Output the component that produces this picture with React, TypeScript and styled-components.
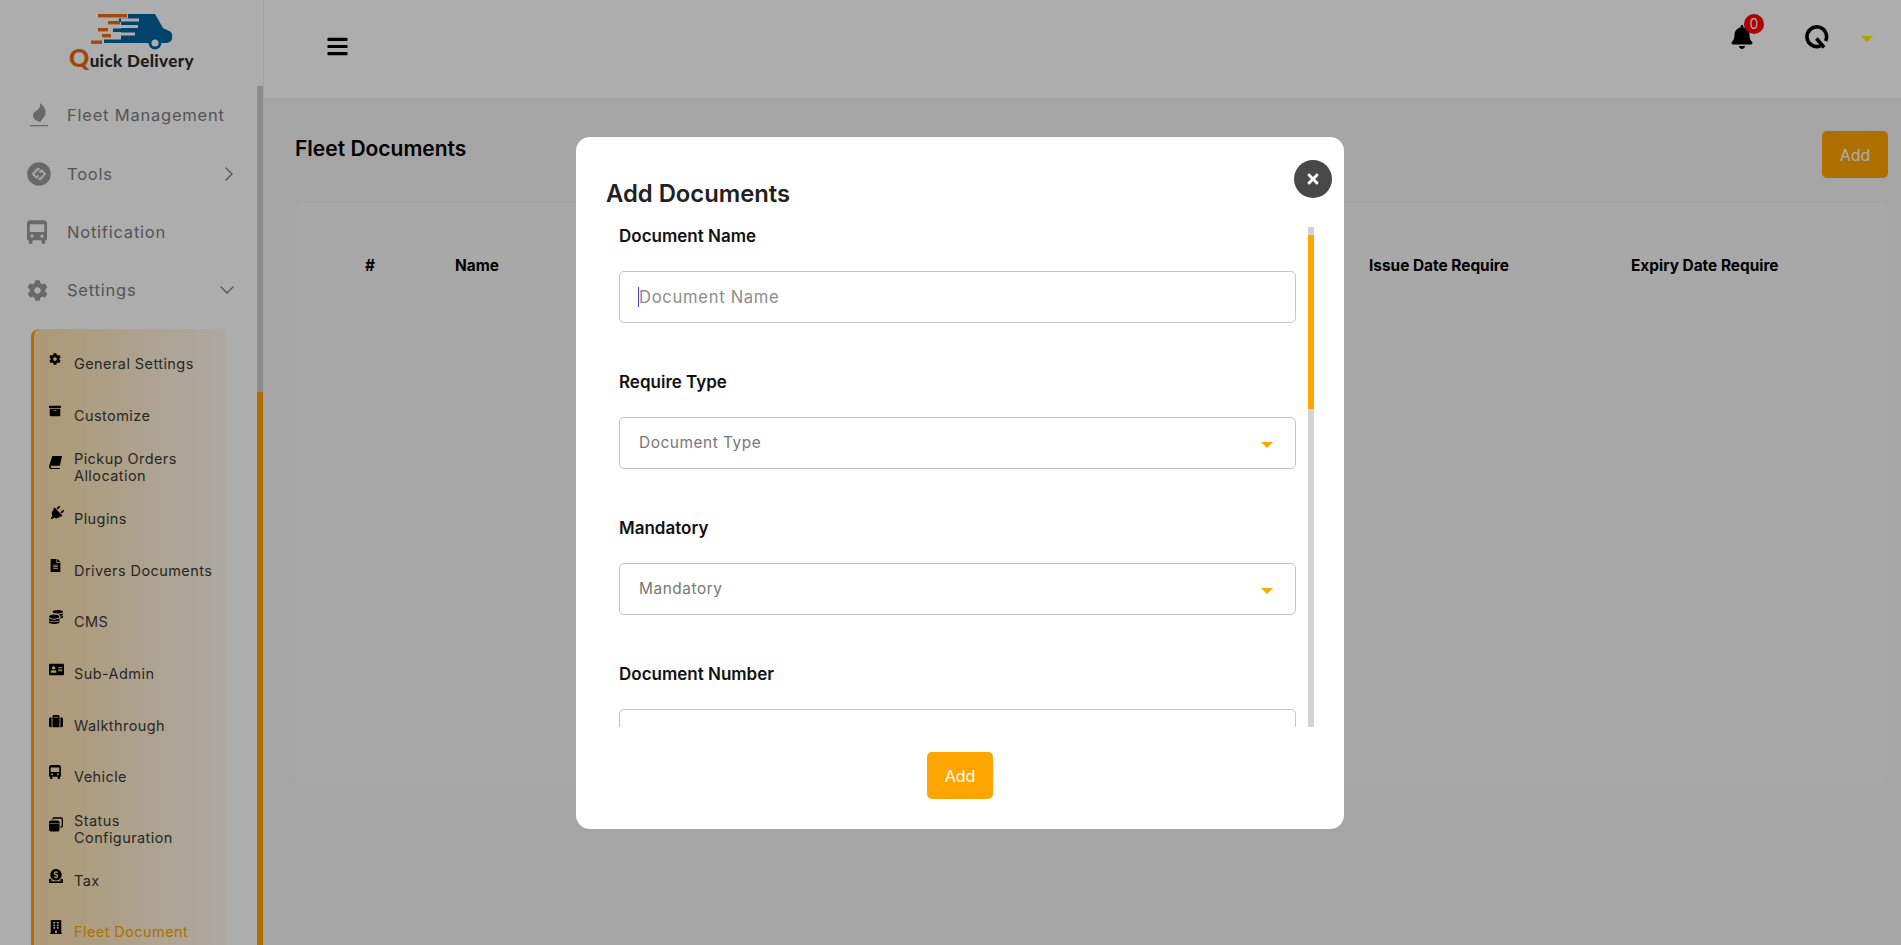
import React from "react";
import styled, { createGlobalStyle } from "styled-components";
import {
  FaAddressCard,
  FaArchive,
  FaBars,
  FaBell,
  FaBuilding,
  FaCog,
  FaCoins,
  FaDonate,
  FaFileAlt,
  FaPlug,
  FaSuitcase,
  FaTimes
} from "react-icons/fa";
import { ChevronDown, ChevronRight } from "lucide-react";

const ORANGE = "#ffa500";
const FONT = `Inter, "Noto Sans", sans-serif`;

const GlobalStyle = createGlobalStyle`
  html, body {
    margin: 0;
    height: 945px;
    overflow: hidden;
    background: #fff;
    font-family: ${FONT};
  }
  * { box-sizing: border-box; }
`;

const Page = styled.div`
  display: flex;
  width: 1901px;
  height: 945px;
  overflow: hidden;
`;

const Sidebar = styled.aside`
  width: 264px;
  flex: none;
  display: flex;
  flex-direction: column;
  background: #fff;
  border-right: 1px solid #f3f3f3;
`;

const LogoBox = styled.div`
  height: 86px;
  flex: none;
  padding: 14px 0 0 69px;
`;

const TruckWrap = styled.div`
  margin-left: 22px;
`;

const LogoName = styled.div`
  display: flex;
  align-items: baseline;
  margin-top: -3px;
  font-family: "Lato", sans-serif;
  font-weight: 900;
  font-size: 17px;
  line-height: 20px;
  letter-spacing: 0.35px;
  color: #2b2b2b;
  white-space: nowrap;
`;

const LogoQ = styled.span`
  color: #e86a10;
  font-size: 25px;
  line-height: 20px;
`;

const SideBody = styled.div`
  flex: 1;
  display: flex;
  min-height: 0;
`;

const SideNav = styled.nav`
  flex: 1;
  min-width: 0;
`;

const Rail = styled.div`
  width: 6px;
  flex: none;
  background: ${ORANGE};
`;

const RailThumb = styled.div`
  height: 306px;
  background: #cfcfcf;
`;

const TopItem = styled.div`
  height: 58.4px;
  display: flex;
  align-items: center;
  padding: 0 18px 0 27px;
  color: #7d7d7d;
  font-size: 16.5px;
  letter-spacing: 0.78px;
`;

const TopIcon = styled.span`
  width: 40px;
  flex: none;
  display: flex;
  align-items: center;
  color: #9b9b9b;
`;

const TopLabel = styled.span`
  flex: 1;
`;

const SideChevronRight = styled(ChevronRight)`
  margin-right: -2px;
`;

const SubPanel = styled.div`
  margin: 9px 0 0 31px;
  width: 196px;
  padding-top: 9px;
  border-left: 3px solid ${ORANGE};
  border-radius: 8px 8px 0 0;
  background: linear-gradient(
    to right,
    rgba(255, 165, 0, 0.33),
    rgba(255, 165, 0, 0.06)
  );
`;

const SubItem = styled.div<{ $active?: boolean }>`
  height: 51.7px;
  display: flex;
  align-items: center;
  padding: 0 14px 0 15px;
  color: ${(p) => (p.$active ? ORANGE : "#3a3a3a")};
  font-size: 14.5px;
  line-height: 17px;
  letter-spacing: 0.42px;
`;

const SubIcon = styled.span`
  width: 25px;
  flex: none;
  display: flex;
  margin-top: -9px;
  color: #000;
`;

const SlantedPlug = styled(FaPlug)`
  transform: rotate(45deg);
`;

const Main = styled.main`
  flex: 1;
  min-width: 0;
  display: flex;
  flex-direction: column;
  background: #f3f3f3;
`;

const Header = styled.header`
  height: 98px;
  flex: none;
  display: flex;
  align-items: center;
  padding: 0 28px 22px 62px;
  background: #fff;
`;

const Burger = styled.span`
  display: flex;
  margin-top: 16px;
  color: #000;
`;

const HeaderRight = styled.div`
  margin-left: auto;
  margin-top: -3px;
  display: flex;
  align-items: center;
`;

const BellBox = styled.div`
  position: relative;
  display: flex;
  margin-right: 51px;
`;

const Badge = styled.span`
  position: absolute;
  top: -11px;
  left: 14px;
  width: 20px;
  height: 20px;
  border-radius: 50%;
  background: #ff0000;
  color: #fff;
  font-size: 14px;
  line-height: 19px;
  text-align: center;
`;

const Caret = styled.span<{ $color: string; $size: number }>`
  display: block;
  width: 0;
  height: 0;
  border-left: ${(p) => p.$size}px solid transparent;
  border-right: ${(p) => p.$size}px solid transparent;
  border-top: ${(p) => p.$size}px solid ${(p) => p.$color};
`;

const UserCaret = styled.span`
  display: flex;
  margin-left: 32px;
  margin-top: 4px;
`;

const Content = styled.section`
  flex: 1;
  padding: 33px 13px 0 31px;
`;

const TitleRow = styled.div`
  display: flex;
  align-items: center;
  justify-content: space-between;
  height: 47px;
`;

const PageTitle = styled.h2`
  margin: -12px 0 0;
  font-size: 21px;
  font-weight: 600;
  color: #000;
`;

const Button = styled.button`
  width: 66px;
  height: 47px;
  border: 0;
  border-radius: 5px;
  background: ${ORANGE};
  color: #fff;
  font-family: ${FONT};
  font-size: 16px;
  padding: 0;
`;

const Card = styled.div`
  height: 581px;
  margin-top: 25px;
  padding: 53px 0 0 70px;
  background: #f8f8f8;
  border-radius: 6px;
`;

const TableHead = styled.div`
  display: grid;
  grid-template-columns: 90px 914px 262px 1fr;
  font-size: 15.4px;
  font-weight: 700;
  line-height: 20px;
  color: #000;
`;

const Overlay = styled.div`
  position: fixed;
  inset: 0;
  display: flex;
  justify-content: center;
  padding: 137px 0 0 19px;
  background: rgba(0, 0, 0, 0.32);
`;

const Modal = styled.div`
  position: relative;
  width: 768px;
  height: 692px;
  padding: 26px 30px 0;
  background: #fff;
  border-radius: 14px;
`;

const ModalTitle = styled.h3`
  margin: 0;
  height: 64px;
  padding-top: 17px;
  font-size: 23.8px;
  line-height: 28px;
  font-weight: 600;
  color: #212121;
`;

const CloseButton = styled.button`
  position: absolute;
  top: 23px;
  right: 12px;
  width: 38px;
  height: 38px;
  display: flex;
  align-items: center;
  justify-content: center;
  padding: 0;
  border: 0;
  border-radius: 50%;
  background: #484848;
  color: #fff;
`;

const ScrollArea = styled.div`
  position: relative;
  height: 500px;
  padding: 0 18px 0 13px;
  overflow: hidden;
`;

const ScrollTrack = styled.div`
  position: absolute;
  top: 0;
  right: 0;
  bottom: 0;
  width: 6px;
  padding-top: 8px;
  background: #d3d3d3;
`;

const ScrollThumb = styled.div`
  height: 174px;
  background: ${ORANGE};
`;

const Field = styled.div`
  margin-bottom: 50px;
`;

const FieldLabel = styled.label`
  display: block;
  height: 18px;
  margin-bottom: 26px;
  font-size: 17px;
  line-height: 18px;
  font-weight: 600;
  color: #111;
`;

const InputWrap = styled.div`
  position: relative;
`;

const TextInput = styled.input`
  display: block;
  width: 100%;
  height: 52px;
  padding: 0 19px;
  border: 1px solid #c4c4c4;
  border-radius: 5px;
  outline: 0;
  background: #fff;
  color: #222;
  font-family: ${FONT};
  font-size: 16.6px;
  letter-spacing: 0.7px;
  caret-color: transparent;
  &::placeholder {
    color: #8c8c8c;
    opacity: 1;
  }
`;

const TextCaret = styled.span`
  position: absolute;
  left: 19px;
  top: 16px;
  width: 1px;
  height: 20px;
  background: #3344bb;
`;

const SelectBox = styled.div`
  display: flex;
  align-items: center;
  justify-content: space-between;
  height: 52px;
  padding: 0 22px 2px 19px;
  border: 1px solid #c4c4c4;
  border-radius: 5px;
  color: #777;
  font-size: 15.4px;
  letter-spacing: 0.55px;
`;

const SelectCaret = styled(Caret)`
  margin-top: 6px;
`;

const ModalFooter = styled.div`
  display: flex;
  justify-content: center;
  padding-top: 25px;
`;

const DrawnIcon = styled.svg`
  display: block;
  flex: none;
`;

const Truck = () => (
  <DrawnIcon width="82" height="36" viewBox="0 0 82 36">
    <path
      d="M37 0H64L72 14L80 18Q81.500 20 81 24Q81 28 76 29H13V25.500H30V18H22V14.500H30V8H28V4.500H37Z"
      fill="#00659f"
    />
    <rect x="30" y="4.500" width="18" height="3" fill="#fff" />
    <rect x="24" y="11" width="23" height="3" fill="#fff" />
    <rect x="20" y="18.500" width="24" height="3" fill="#fff" />
    <rect x="7" y="0" width="29" height="3.400" fill="#f26a0f" />
    <rect x="17" y="7" width="12" height="3.400" fill="#f26a0f" />
    <rect x="7" y="14" width="10" height="3.400" fill="#f26a0f" />
    <rect x="11" y="20" width="9" height="3.400" fill="#f26a0f" />
    <rect x="0" y="26.500" width="11" height="3.400" fill="#f26a0f" />
    <circle cx="64" cy="29" r="6.500" fill="#00659f" />
    <circle cx="64" cy="29" r="3.500" fill="#fff" />
  </DrawnIcon>
);

const FlameIcon = () => (
  <DrawnIcon width="24" height="24" viewBox="0 0 24 24">
    <path
      d="M13 0C17 3 19.500 7 18.500 11C17.800 14 15 15.500 13.500 19C8.500 18 6 15.500 6 12.500C6 9.500 9 8.500 11.500 6C12.800 4.500 13.500 2.500 13 0Z"
      fill="currentColor"
    />
    <rect x="3" y="22" width="18" height="1.300" fill="currentColor" />
  </DrawnIcon>
);

const ToolsIcon = () => (
  <DrawnIcon width="24" height="24" viewBox="0 0 24 24">
    <circle cx="12" cy="12" r="11.800" fill="#9b9b9b" />
    <path
      d="M12.500 7.500L11 6.800L6 12L9.500 15.500L11.500 13.500M11.500 16.500L13 17.200L18 12L14.500 8.500L12.500 10.500"
      fill="none"
      stroke="#f4f4f4"
      strokeWidth="2"
    />
  </DrawnIcon>
);

const BusIcon = ({ width, height }: { width: number; height: number }) => (
  <DrawnIcon width={width} height={height} viewBox="0 0 22 26">
    <path
      fillRule="evenodd"
      d="M4 0H18Q22 0 22 4V21Q22 22 20 22V25Q20 26 19 26H17Q16 26 16 25V22H6V25Q6 26 5 26H3Q2 26 2 25V22Q0 22 0 21V4Q0 0 4 0ZM3 4.500V13H19V4.500ZM4 16V19H7V16ZM15 16V19H18V16Z"
      fill="currentColor"
    />
  </DrawnIcon>
);

const SlantedBook = () => (
  <DrawnIcon width="13" height="13" viewBox="0 0 12 12">
    <path
      d="M3 0H12L10 9H2.500Q1.500 9 1.500 10Q1.500 11 2.500 11H10V12H2Q0 12 0 10Q0 9.500 0.500 8Z"
      fill="currentColor"
    />
  </DrawnIcon>
);

const StackedSquares = () => (
  <DrawnIcon width="14" height="15" viewBox="0 0 14 15">
    <path
      d="M4 2.500V2Q4 1 5 1H12Q13.300 1 13.300 2V9Q13.300 10 12 10H11.500"
      fill="none"
      stroke="currentColor"
      strokeWidth="1.300"
    />
    <rect x="0" y="3.500" width="10.500" height="11" rx="2" fill="currentColor" />
    <rect x="0.500" y="6" width="9.500" height="0.800" fill="#b5a07a" />
  </DrawnIcon>
);

const UserLogo = () => (
  <DrawnIcon width="24" height="24" viewBox="0 0 24 24">
    <path
      d="M15.500 20.800A9.800 9.800 0 1 1 20.600 16"
      fill="none"
      stroke="#000"
      strokeWidth="3.600"
    />
    <path d="M11.500 13.500L19 22.500" stroke="#000" strokeWidth="3.600" />
  </DrawnIcon>
);

const subItems = [
  { icon: <FaCog size={12} />, label: "General Settings" },
  { icon: <FaArchive size={12} />, label: "Customize" },
  { icon: <SlantedBook />, label: "Pickup Orders Allocation" },
  { icon: <SlantedPlug size={15} />, label: "Plugins" },
  { icon: <FaFileAlt size={13} />, label: "Drivers Documents" },
  { icon: <FaCoins size={14} />, label: "CMS" },
  { icon: <FaAddressCard size={15} />, label: "Sub-Admin" },
  { icon: <FaSuitcase size={14} />, label: "Walkthrough" },
  { icon: <BusIcon width={12} height={14} />, label: "Vehicle" },
  { icon: <StackedSquares />, label: "Status Configuration" },
  { icon: <FaDonate size={14} />, label: "Tax" },
  { icon: <FaBuilding size={14} />, label: "Fleet Document", active: true }
];

export default function App() {
  return (
    <>
      <GlobalStyle />
      <Page>
        <Sidebar>
          <LogoBox>
            <TruckWrap>
              <Truck />
            </TruckWrap>
            <LogoName>
              <LogoQ>Q</LogoQ>uick Delivery
            </LogoName>
          </LogoBox>
          <SideBody>
            <SideNav>
              <TopItem>
                <TopIcon>
                  <FlameIcon />
                </TopIcon>
                <TopLabel>Fleet Management</TopLabel>
              </TopItem>
              <TopItem>
                <TopIcon>
                  <ToolsIcon />
                </TopIcon>
                <TopLabel>Tools</TopLabel>
                <SideChevronRight size={24} strokeWidth={1.4} />
              </TopItem>
              <TopItem>
                <TopIcon>
                  <BusIcon width={20} height={24} />
                </TopIcon>
                <TopLabel>Notification</TopLabel>
              </TopItem>
              <TopItem>
                <TopIcon>
                  <FaCog size={21} />
                </TopIcon>
                <TopLabel>Settings</TopLabel>
                <ChevronDown size={24} strokeWidth={1.4} />
              </TopItem>
              <SubPanel>
                {subItems.map((item) => (
                  <SubItem key={item.label} $active={item.active}>
                    <SubIcon>{item.icon}</SubIcon>
                    <span>{item.label}</span>
                  </SubItem>
                ))}
              </SubPanel>
            </SideNav>
            <Rail>
              <RailThumb />
            </Rail>
          </SideBody>
        </Sidebar>
        <Main>
          <Header>
            <Burger>
              <FaBars size={23} />
            </Burger>
            <HeaderRight>
              <BellBox>
                <FaBell size={24} color="#000" />
                <Badge>0</Badge>
              </BellBox>
              <UserLogo />
              <UserCaret>
                <Caret $color="#fff200" $size={6} />
              </UserCaret>
            </HeaderRight>
          </Header>
          <Content>
            <TitleRow>
              <PageTitle>Fleet Documents</PageTitle>
              <Button>Add</Button>
            </TitleRow>
            <Card>
              <TableHead>
                <span>#</span>
                <span>Name</span>
                <span>Issue Date Require</span>
                <span>Expiry Date Require</span>
              </TableHead>
            </Card>
          </Content>
        </Main>
      </Page>
      <Overlay>
        <Modal>
          <ModalTitle>Add Documents</ModalTitle>
          <CloseButton>
            <FaTimes size={16} />
          </CloseButton>
          <ScrollArea>
            <Field>
              <FieldLabel>Document Name</FieldLabel>
              <InputWrap>
                <TextInput placeholder="Document Name" />
                <TextCaret />
              </InputWrap>
            </Field>
            <Field>
              <FieldLabel>Require Type</FieldLabel>
              <SelectBox>
                Document Type
                <SelectCaret $color={ORANGE} $size={6} />
              </SelectBox>
            </Field>
            <Field>
              <FieldLabel>Mandatory</FieldLabel>
              <SelectBox>
                Mandatory
                <SelectCaret $color={ORANGE} $size={6} />
              </SelectBox>
            </Field>
            <Field>
              <FieldLabel>Document Number</FieldLabel>
              <InputWrap>
                <TextInput />
              </InputWrap>
            </Field>
            <ScrollTrack>
              <ScrollThumb />
            </ScrollTrack>
          </ScrollArea>
          <ModalFooter>
            <Button>Add</Button>
          </ModalFooter>
        </Modal>
      </Overlay>
    </>
  );
}
